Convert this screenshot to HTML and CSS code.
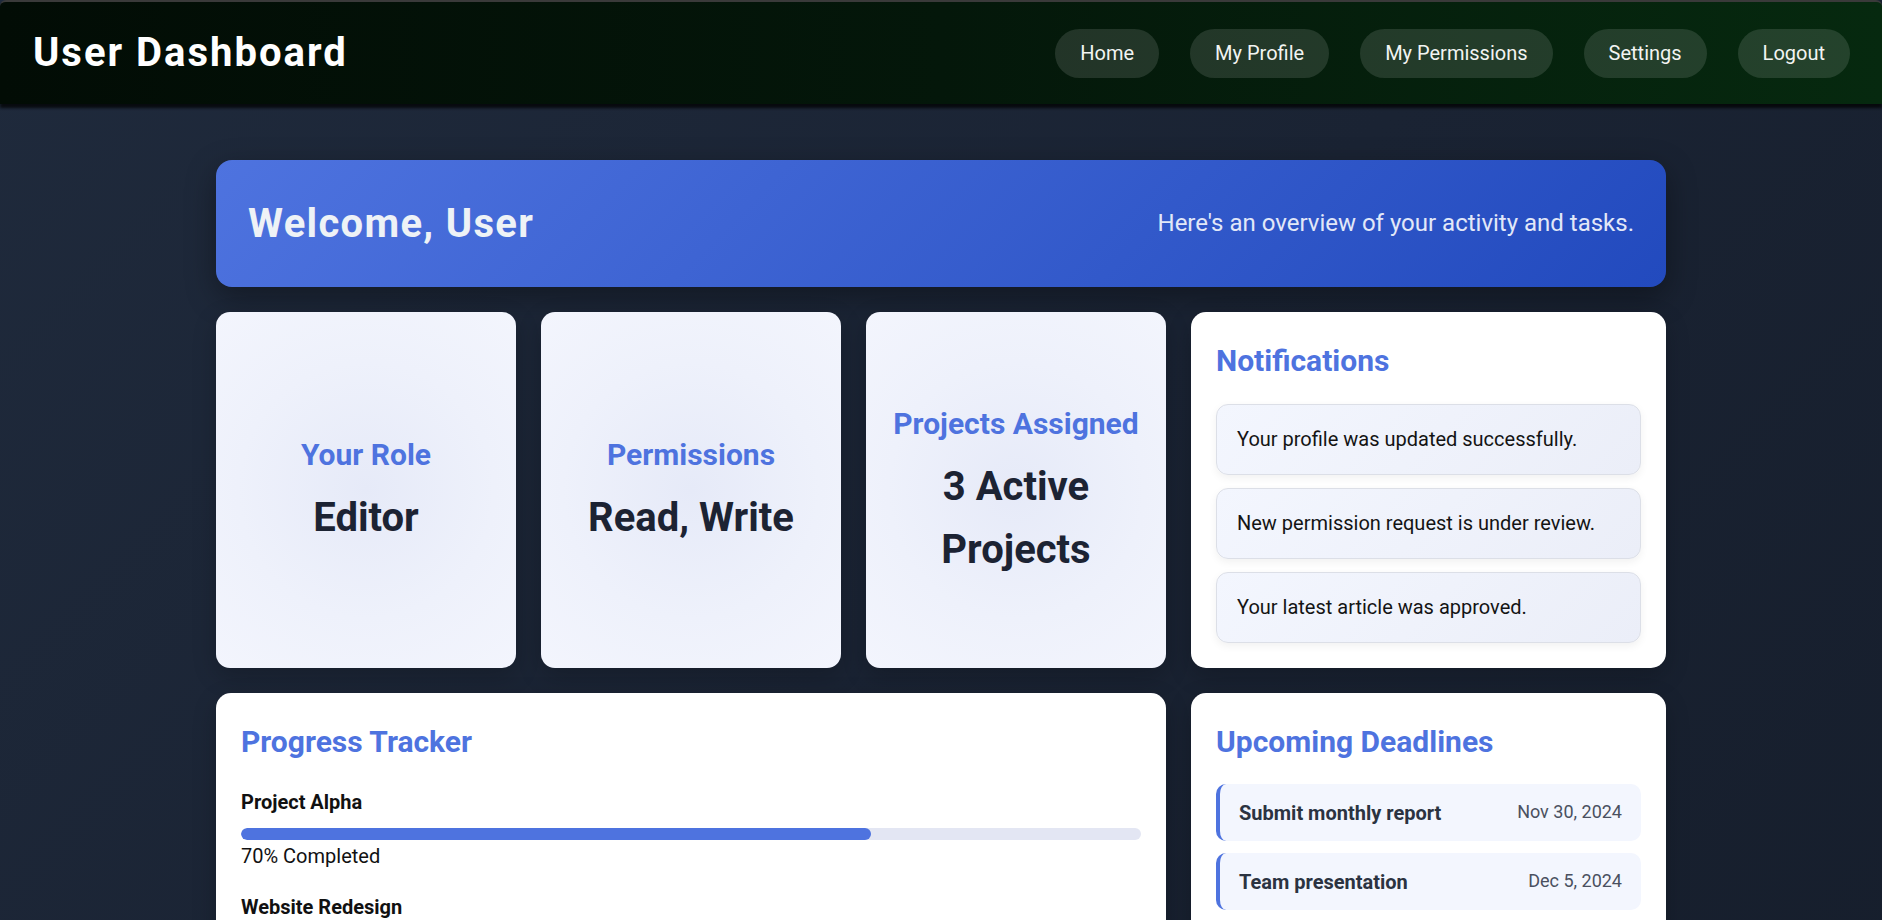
FILE: index.html
```html
<!DOCTYPE html>
<html lang="en">
<head>
<meta charset="UTF-8">
<title>User Dashboard</title>
<link rel="stylesheet" href="styles.css">
</head>
<body>
<header class="topbar">
  <h1 class="brand">User Dashboard</h1>
  <nav class="nav">
    <a class="nav-link" href="#">Home</a>
    <a class="nav-link" href="#">My Profile</a>
    <a class="nav-link" href="#">My Permissions</a>
    <a class="nav-link" href="#">Settings</a>
    <a class="nav-link" href="#">Logout</a>
  </nav>
</header>

<main class="container">
  <section class="welcome">
    <h2 class="welcome-title">Welcome, User</h2>
    <p class="welcome-sub">Here's an overview of your activity and tasks.</p>
  </section>

  <section class="grid">
    <div class="stat-card">
      <h3 class="stat-title">Your Role</h3>
      <p class="stat-value">Editor</p>
    </div>
    <div class="stat-card">
      <h3 class="stat-title">Permissions</h3>
      <p class="stat-value">Read, Write</p>
    </div>
    <div class="stat-card">
      <h3 class="stat-title">Projects Assigned</h3>
      <p class="stat-value">3 Active Projects</p>
    </div>
    <div class="panel">
      <h3 class="panel-title">Notifications</h3>
      <ul class="notif-list">
        <li class="notif">Your profile was updated successfully.</li>
        <li class="notif">New permission request is under review.</li>
        <li class="notif">Your latest article was approved.</li>
      </ul>
    </div>

    <div class="panel span-3">
      <h3 class="panel-title">Progress Tracker</h3>
      <div class="progress-list">
        <div class="progress-item">
          <p class="progress-label">Project Alpha</p>
          <div class="bar"><div class="bar-fill" style="width:70%"></div></div>
          <p class="progress-text">70% Completed</p>
        </div>
        <div class="progress-item">
          <p class="progress-label">Website Redesign</p>
          <div class="bar"><div class="bar-fill" style="width:45%"></div></div>
          <p class="progress-text">45% Completed</p>
        </div>
        <div class="progress-item">
          <p class="progress-label">Mobile App Launch</p>
          <div class="bar"><div class="bar-fill" style="width:20%"></div></div>
          <p class="progress-text">20% Completed</p>
        </div>
      </div>
    </div>
    <div class="panel">
      <h3 class="panel-title">Upcoming Deadlines</h3>
      <ul class="deadline-list">
        <li class="deadline"><span class="deadline-name">Submit monthly report</span><span class="deadline-date">Nov 30, 2024</span></li>
        <li class="deadline"><span class="deadline-name">Team presentation</span><span class="deadline-date">Dec 5, 2024</span></li>
        <li class="deadline"><span class="deadline-name">Content review</span><span class="deadline-date">Dec 12, 2024</span></li>
      </ul>
    </div>
  </section>
</main>
</body>
</html>
```
FILE: styles.css
```css
* { box-sizing: border-box; }

html, body {
  margin: 0;
  padding: 0;
}

body {
  font-family: Roboto, "Liberation Sans", Arial, sans-serif;
  line-height: 1.6;
  color: #1a1a1a;
  background: linear-gradient(135deg, #1f2a3c 0%, #1a2333 50%, #161e2c 100%);
  min-height: 100vh;
}

.topbar {
  display: flex;
  align-items: center;
  justify-content: space-between;
  height: 104px;
  padding: 0 32px 0 33px;
  border-top: 2px solid #3a3a3a;
  border-radius: 6px 6px 0 0;
  background: linear-gradient(90deg, #020c05 0%, #04170a 50%, #06290f 100%);
  box-shadow: 0 4px 3px rgba(0, 0, 0, 0.75);
}

.brand {
  margin: 0;
  font-size: 40px;
  font-weight: 700;
  letter-spacing: 2px;
  color: #ffffff;
  line-height: 1.2;
}

.nav {
  display: flex;
  gap: 31px;
}

.nav-link {
  display: block;
  padding: 13px 25px;
  font-size: 20px;
  line-height: 23px;
  color: #f2f4f2;
  text-decoration: none;
  background: rgba(255, 255, 255, 0.12);
  border-radius: 25px;
}

.container {
  max-width: 1450px;
  margin: 56px auto 0;
}

.welcome {
  display: flex;
  align-items: center;
  justify-content: space-between;
  height: 127px;
  padding: 0 32px;
  border-radius: 16px;
  background: linear-gradient(135deg, #4e73df 0%, #224abe 100%);
  box-shadow: 0 10px 30px rgba(0, 0, 0, 0.35);
}

.welcome-title {
  margin: 0;
  font-size: 40px;
  font-weight: 700;
  letter-spacing: 1.3px;
  color: #eef2f6;
  line-height: 1.2;
}

.welcome-sub {
  margin: 0;
  font-size: 24px;
  color: #e2e8f8;
}

.grid {
  display: grid;
  grid-template-columns: 300px 300px 300px 1fr;
  gap: 25px;
  margin-top: 25px;
}

.span-3 { grid-column: span 3; }

.stat-card {
  display: flex;
  flex-direction: column;
  align-items: center;
  justify-content: center;
  height: 356px;
  padding: 20px;
  text-align: center;
  border-radius: 14px;
  background: radial-gradient(circle at center, #e6eaf8 0%, #eef1fb 55%, #f3f5fd 100%);
  box-shadow: 0 8px 24px rgba(0, 0, 0, 0.2);
}

.stat-title {
  margin: 0 0 7px;
  font-size: 30px;
  line-height: 48px;
  font-weight: 700;
  color: #4e73df;
}

.stat-value {
  margin: 0;
  font-size: 40px;
  line-height: 63px;
  font-weight: 700;
  color: #1c2333;
}

.panel {
  padding: 25px;
  border-radius: 15px;
  background: #ffffff;
  box-shadow: 0 8px 24px rgba(0, 0, 0, 0.2);
}

.panel-title {
  margin: 0 0 19px;
  font-size: 30px;
  line-height: 48px;
  font-weight: 700;
  color: #4e73df;
}

.notif-list,
.deadline-list {
  list-style: none;
  margin: 0;
  padding: 0;
  display: flex;
  flex-direction: column;
}

.notif-list { gap: 13px; }
.deadline-list { gap: 12px; margin-top: -1px; }

.notif {
  padding: 19px 20px;
  font-size: 20px;
  line-height: 31px;
  color: #141414;
  border: 1px solid #dcdfe7;
  border-radius: 12px;
  background: linear-gradient(135deg, #f3f6fe 0%, #ebeef8 100%);
  box-shadow: 0 3px 8px rgba(0, 0, 0, 0.06);
}

.progress-list { padding-top: 1px; }

.progress-item { margin-bottom: 19px; }

.progress-label {
  margin: 0 0 10px;
  font-size: 20px;
  line-height: 32px;
  font-weight: 700;
  color: #111111;
}

.bar {
  height: 12px;
  border-radius: 6px;
  background: #e3e6f3;
  overflow: hidden;
}

.bar-fill {
  height: 100%;
  border-radius: 6px;
  background: #4e73df;
}

.progress-text {
  margin: 0;
  font-size: 20px;
  line-height: 32px;
  color: #111111;
}

.deadline {
  display: flex;
  align-items: center;
  justify-content: space-between;
  height: 57px;
  padding: 0 19px 0 19px;
  border-left: 4px solid #4e73df;
  border-radius: 10px;
  background: #f3f6fe;
}

.deadline-name {
  font-size: 20px;
  font-weight: 700;
  color: #2b3341;
}

.deadline-date {
  font-size: 18px;
  color: #4a5060;
}
```
